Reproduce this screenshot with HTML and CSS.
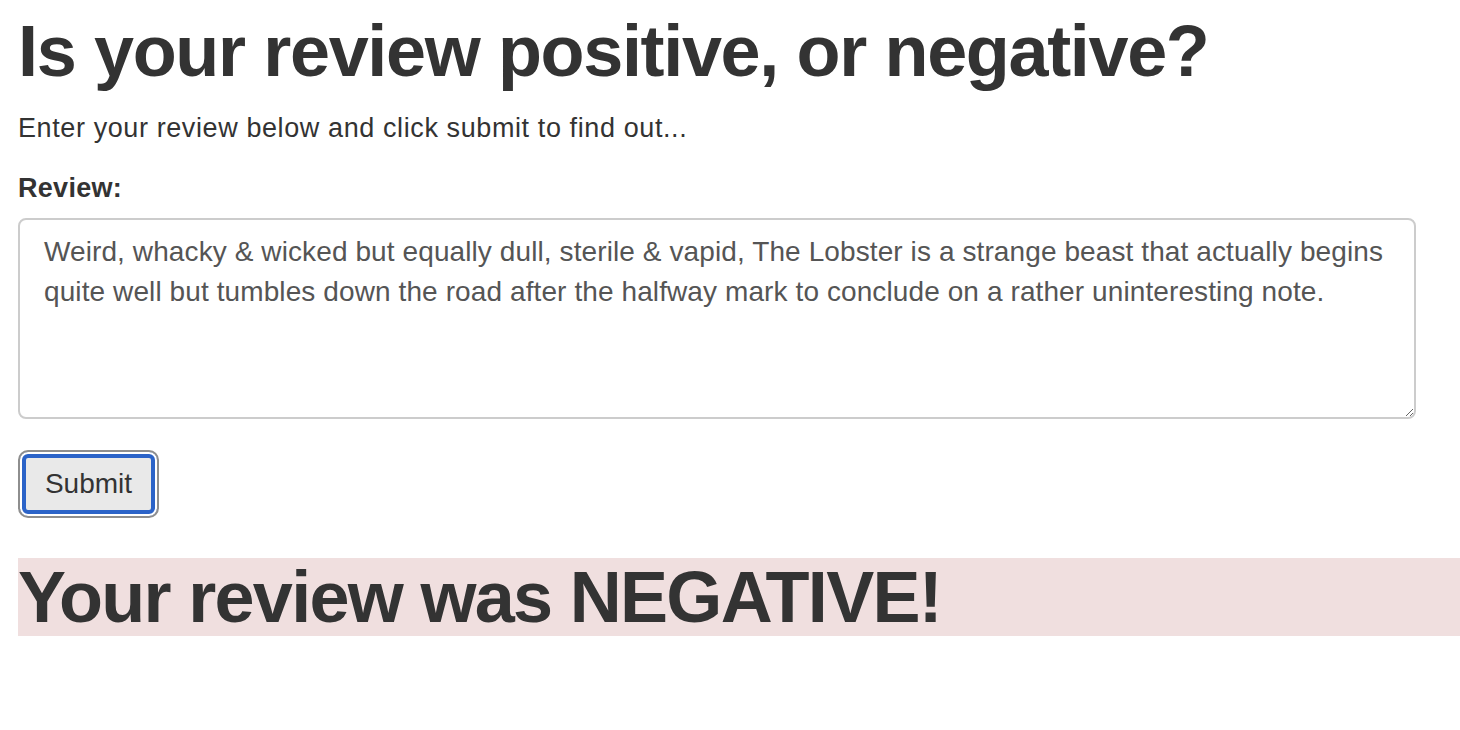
FILE: index.html
```html
<!DOCTYPE html>
<html>
<head>
<meta charset="utf-8">
<link rel="stylesheet" href="styles.css">
</head>
<body>
<div class="page">
  <h1 class="title">Is your review positive, or negative?</h1>
  <p class="lead">Enter your review below and click submit to find out...</p>
  <form class="review-form">
    <label class="field-label" for="review">Review:</label>
    <textarea id="review" class="review-input">Weird, whacky &amp; wicked but equally dull, sterile &amp; vapid, The Lobster is a strange beast that actually begins quite well but tumbles down the road after the halfway mark to conclude on a rather uninteresting note.</textarea>
    <button type="button" class="submit-btn">Submit</button>
  </form>
  <div class="result">
    <h1 class="result-text">Your review was NEGATIVE!</h1>
  </div>
</div>
</body>
</html>
```

FILE: styles.css
```css
html, body {
  margin: 0;
  padding: 0;
  background: #fff;
}
body {
  font-family: "Liberation Sans", Arial, Helvetica, sans-serif;
  color: #333;
}
.page {
  padding: 12px 0 0 18px;
}
.title {
  margin: 0;
  font-size: 72px;
  font-weight: bold;
  line-height: 1.1;
  letter-spacing: -1.35px;
}
.lead {
  margin: 18px 0 0 0;
  font-size: 27px;
  line-height: 38px;
  letter-spacing: 0.6px;
}
.review-form {
  display: flex;
  flex-direction: column;
  align-items: flex-start;
}
.field-label {
  margin-top: 22px;
  font-size: 27px;
  font-weight: bold;
  line-height: 38px;
  letter-spacing: 0.3px;
}
.review-input {
  box-sizing: border-box;
  margin-top: 11px;
  width: 1398px;
  height: 201px;
  padding: 12px 24px;
  border: 2px solid #ccc;
  border-radius: 8px;
  font-family: "Liberation Sans", Arial, Helvetica, sans-serif;
  font-size: 28px;
  line-height: 40px;
  letter-spacing: 0.1px;
  color: #555;
  resize: vertical;
  outline: none;
}
.submit-btn {
  box-sizing: border-box;
  margin-top: 31px;
  width: 141px;
  height: 68px;
  border: 2px solid #8e8e8e;
  border-radius: 10px;
  background: #e9e9e9;
  box-shadow: inset 0 0 0 2px #fff, inset 0 0 0 6px #2b63c8;
  font-family: "Liberation Sans", Arial, Helvetica, sans-serif;
  font-size: 28px;
  color: #333;
  padding: 0;
}
.result {
  margin-top: 40px;
  background: #f0dfdf;
}
.result-text {
  margin: 0;
  font-size: 72px;
  font-weight: bold;
  line-height: 78px;
  letter-spacing: -1.7px;
}
```
